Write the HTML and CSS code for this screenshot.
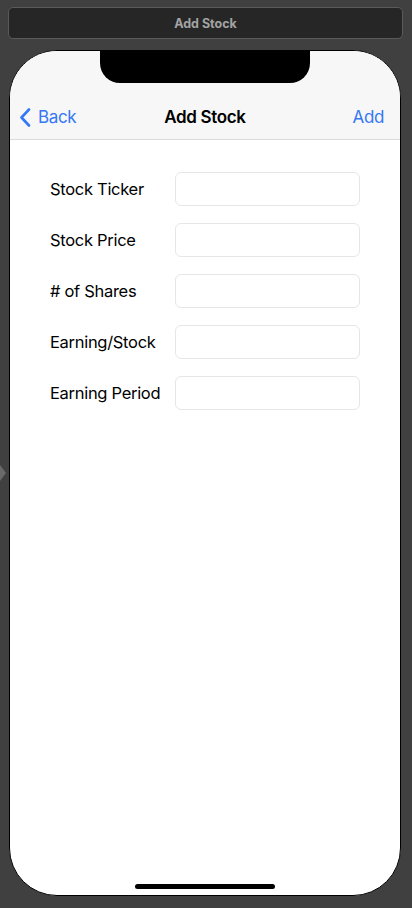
FILE: index.html
```html
<!DOCTYPE html>
<html>
<head>
<meta charset="utf-8">
<link rel="stylesheet" href="styles.css">
</head>
<body>
<div class="toolbar">Add Stock</div>
<div class="side-arrow"></div>
<div class="phone">
  <div class="notch"></div>
  <div class="navbar">
    <div class="nav-row">
      <div class="nav-back">
        <svg width="12" height="19" viewBox="0 0 12 19"><path d="M10 1.5 L2.5 9.5 L10 17.5" fill="none" stroke="#3478f6" stroke-width="2.6" stroke-linecap="round" stroke-linejoin="round"/></svg>
        <span>Back</span>
      </div>
      <div class="nav-title">Add Stock</div>
      <div class="nav-add">Add</div>
    </div>
  </div>
  <div class="form">
    <div class="row"><span class="label">Stock Ticker</span><div class="field"></div></div>
    <div class="row"><span class="label">Stock Price</span><div class="field"></div></div>
    <div class="row"><span class="label"># of Shares</span><div class="field"></div></div>
    <div class="row"><span class="label">Earning/Stock</span><div class="field"></div></div>
    <div class="row"><span class="label">Earning Period</span><div class="field"></div></div>
  </div>
  <div class="home-indicator"></div>
</div>
</body>
</html>
```
FILE: styles.css
```css
html, body {
  margin: 0;
  padding: 0;
  background: #404040;
  width: 412px;
  height: 908px;
  overflow: hidden;
  font-family: "Inter", "Liberation Sans", sans-serif;
}
.toolbar {
  margin: 7px 9px 0 8px;
  height: 30px;
  border: 1px solid #5a5a5a;
  border-radius: 5px;
  background: #262626;
  color: #a3a3a3;
  font-weight: 700;
  font-size: 12.5px;
  display: flex;
  align-items: center;
  justify-content: center;
}
.side-arrow {
  position: absolute;
  left: 0;
  top: 465px;
  width: 0;
  height: 0;
  border-top: 8px solid transparent;
  border-bottom: 8px solid transparent;
  border-left: 6px solid #6a6a6a;
}
.phone {
  position: relative;
  margin: 11px 0 0 9px;
  width: 390px;
  height: 844px;
  border: 1px solid #000;
  border-radius: 48px;
  overflow: hidden;
  background: #fff;
}
.notch {
  position: absolute;
  left: 90px;
  top: 0;
  width: 210px;
  height: 32px;
  background: #000;
  border-radius: 0 0 20px 20px;
}
.navbar {
  background: #f7f7f7;
  border-bottom: 1px solid #dcdcdc;
  padding-top: 46px;
  padding-bottom: 2px;
}
.nav-row {
  height: 40px;
  display: flex;
  align-items: center;
  justify-content: space-between;
  padding: 0 16px 0 9px;
  position: relative;
  font-size: 17px;
  letter-spacing: -0.35px;
}
.nav-back {
  display: flex;
  align-items: center;
  gap: 7px;
  color: #3478f6;
}
.nav-title {
  position: absolute;
  left: 0;
  right: 0;
  text-align: center;
  font-weight: 600;
  color: #000;
  pointer-events: none;
}
.nav-add {
  color: #3478f6;
}
.form {
  padding: 32px 40px 0 40px;
  display: flex;
  flex-direction: column;
  gap: 17px;
}
.row {
  display: flex;
  align-items: center;
  height: 34px;
}
.label {
  width: 125px;
  font-size: 16.5px;
  letter-spacing: -0.3px;
  color: #000;
}
.field {
  width: 183px;
  height: 32px;
  border: 1px solid #e6e6e6;
  border-radius: 6px;
  background: #fff;
}
.home-indicator {
  position: absolute;
  left: 125px;
  bottom: 6px;
  width: 140px;
  height: 5px;
  border-radius: 3px;
  background: #000;
}
```
